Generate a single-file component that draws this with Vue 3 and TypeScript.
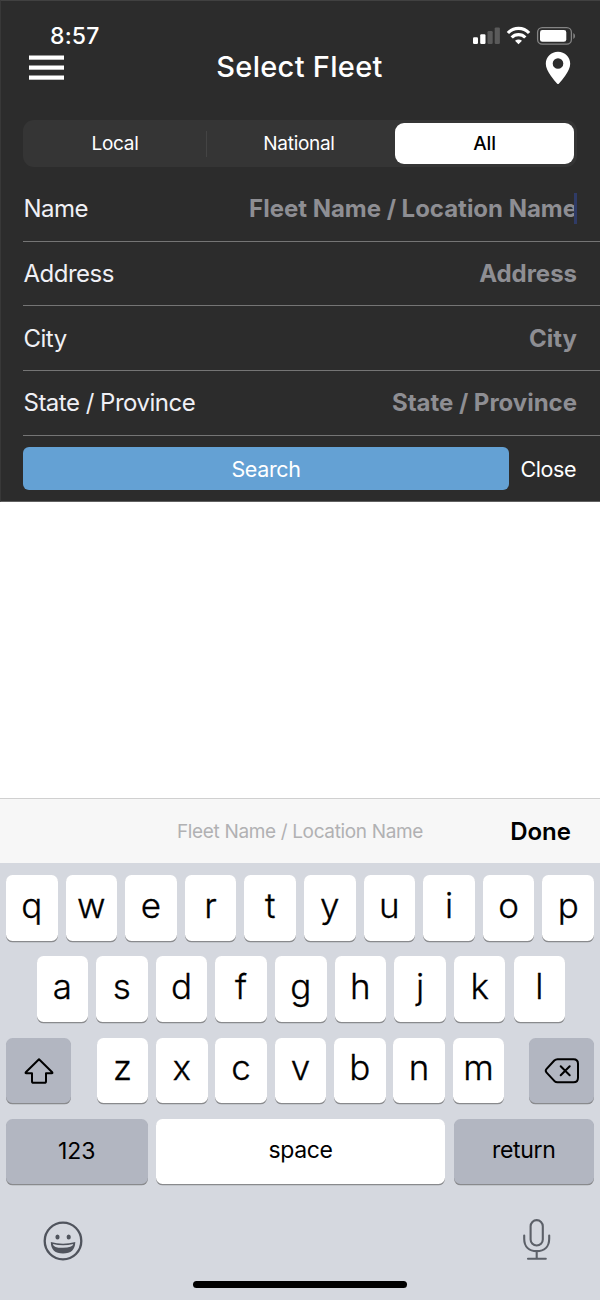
<script setup lang="ts">
interface Field {
  id: string
  label: string
  placeholder: string
  active?: boolean
}

const segments: string[] = ['Local', 'National', 'All']
const selected = 'All'

const fields: Field[] = [
  { id: 'name', label: 'Name', placeholder: 'Fleet Name / Location Name', active: true },
  { id: 'address', label: 'Address', placeholder: 'Address' },
  { id: 'city', label: 'City', placeholder: 'City' },
  { id: 'state', label: 'State / Province', placeholder: 'State / Province' },
]

const topRow: string[] = [...'qwertyuiop']
const homeRow: string[] = [...'asdfghjkl']
const bottomRow: string[] = [...'zxcvbnm']
</script>

<template>
  <div class="screen">
    <header class="panel">
      <div class="status">
        <span class="time">8:57</span>
        <svg class="status-icons" width="104" height="20" viewBox="0 0 104 20">
          <rect x="1" y="11.3" width="5" height="6.7" rx="1.2" fill="#fff" />
          <rect x="8.2" y="8.3" width="5.3" height="9.7" rx="1.2" fill="#fff" />
          <rect x="15.5" y="5" width="5.2" height="13" rx="1.2" fill="#5a5a5a" />
          <rect x="22.7" y="1.4" width="5.2" height="16.6" rx="1.2" fill="#5a5a5a" />
          <g fill="none" stroke="#fff" stroke-width="3.2">
            <path d="M35.900 7a14.400 14.400 0 0 1 21.200 0" />
            <path d="M39.700 11.500a9.300 9.300 0 0 1 13.600 0" />
          </g>
          <path d="M43 14.800q3.500-2.800 7 0L46.500 18.200z" fill="#fff" />
          <rect x="65.6" y="1.6" width="33.8" height="16.6" rx="4.6" fill="none" stroke="#858585" stroke-width="1.3" />
          <rect x="68" y="4" width="26.3" height="11.8" rx="2.4" fill="#fff" />
          <path d="M101.3 7q1.8 1 1.8 3t-1.8 3z" fill="#858585" />
        </svg>
      </div>

      <div class="navbar">
        <svg width="35" height="26" viewBox="0 0 35 26" fill="#fff">
          <rect y="0.5" width="35" height="4.2" />
          <rect y="10.5" width="35" height="4.2" />
          <rect y="20.5" width="35" height="4.2" />
        </svg>
        <h1 class="title">Select Fleet</h1>
        <svg width="26" height="34" viewBox="0 0 26 34">
          <path d="M13 .7C6.2.7.8 6 .8 12.7c0 4.2 2.3 8 5 12 2.200 3.200 4.700 6 6.200 7.900q1 1 2 0c1.500-1.900 4-4.700 6.200-7.900 2.700-4 5-7.800 5-12C25.200 6 19.800.7 13 .7zM13 7.200a5.300 5.300 0 1 1 0 10.600 5.300 5.300 0 0 1 0-10.600z" fill="#fff" fill-rule="evenodd" />
        </svg>
      </div>

      <div class="segmented">
        <div v-for="s in segments" :key="s" class="segment" :class="{ selected: s === selected }">{{ s }}</div>
      </div>

      <div class="fields">
        <div v-for="f in fields" :key="f.id" class="field">
          <span class="label">{{ f.label }}</span>
          <span class="placeholder" :class="f.id">{{ f.placeholder }}<i v-if="f.active" class="caret" /></span>
        </div>
      </div>

      <div class="actions">
        <div class="search">Search</div>
        <span class="close">Close</span>
      </div>
    </header>

    <main class="results" />

    <div class="accessory">
      <span class="hint">Fleet Name / Location Name</span>
      <span class="done">Done</span>
    </div>

    <section class="keyboard">
      <div class="keys">
        <div v-for="k in topRow" :key="k" class="key"><span>{{ k }}</span></div>
      </div>
      <div class="keys home">
        <div v-for="k in homeRow" :key="k" class="key"><span>{{ k }}</span></div>
      </div>
      <div class="keys lower">
        <div class="key gray side">
          <svg width="30" height="28" viewBox="0 0 30 28" fill="none" stroke="#000" stroke-width="2" stroke-linejoin="round">
            <path d="M15 2.200 28.200 15.300q.6.900-.4.900H22v8q0 1.600-1.600 1.600H9.600Q8 25.800 8 24.200v-8H2.200q-1 0-.4-.9z" />
          </svg>
        </div>
        <div class="letters">
          <div v-for="k in bottomRow" :key="k" class="key"><span>{{ k }}</span></div>
        </div>
        <div class="key gray side">
          <svg width="36" height="28" viewBox="0 0 36 28" fill="none" stroke="#000" stroke-width="2" stroke-linejoin="round" stroke-linecap="round">
            <path d="M13.500 2.200H29.500Q34 2.200 34 6.700V20.700Q34 25.200 29.500 25.200H13.500Q11.700 25.200 10.300 23.900L2.600 15.600Q.9 13.700 2.600 11.800L10.300 3.500Q11.700 2.200 13.500 2.200z" />
            <path d="M16.700 9.200l9 9m0-9-9 9" />
          </svg>
        </div>
      </div>
      <div class="keys functions">
        <div class="key gray word numbers"><span>123</span></div>
        <div class="key word space"><span>space</span></div>
        <div class="key gray word return"><span>return</span></div>
      </div>
      <div class="dock">
        <svg width="40" height="40" viewBox="0 0 40 40">
          <circle cx="20" cy="20" r="18.300" fill="none" stroke="#50545d" stroke-width="2.300" />
          <ellipse cx="14.500" cy="16" rx="2.100" ry="2.500" fill="#50545d" />
          <ellipse cx="25.700" cy="16" rx="2.100" ry="2.500" fill="#50545d" />
          <path d="M7.800 20.900Q20 24.500 32.300 20.900 32 32.400 20 32.400T7.800 20.900z" fill="#50545d" />
          <path d="M9.800 22.900Q20 25.400 30.300 22.900 29.400 26.600 20 26.800T9.800 22.900z" fill="#d5d8df" />
        </svg>
        <svg width="30" height="44" viewBox="0 1.500 30 44" fill="none" stroke="#5c6068" stroke-width="2.100" stroke-linecap="round">
          <rect x="8.600" y="2.600" width="12.200" height="25.400" rx="6.100" />
          <path d="M2.200 18v3.200c0 8 5 12.400 12.500 12.400s12.500-4.400 12.500-12.400V18M14.700 33.600v7.600M6 41.200h17.800" />
        </svg>
      </div>
      <div class="home-indicator" />
    </section>
  </div>
</template>

<style>
body {
  margin: 0;
}
</style>

<style scoped>
.screen {
  box-sizing: border-box;
  width: 600px;
  height: 1300px;
  display: flex;
  flex-direction: column;
  overflow: hidden;
  background: #fff;
  font-family: Inter, "Liberation Sans", sans-serif;
}

.panel {
  box-sizing: border-box;
  height: 502px;
  flex: none;
  background: #2c2c2c;
  color: #fff;
  border-top: 1px solid #414141;
  border-left: 1px solid #383838;
  border-bottom: 1px solid #606060;
}

.status {
  height: 50px;
  box-sizing: border-box;
  padding: 21px 24px 0 49px;
  display: flex;
  justify-content: space-between;
}

.time {
  line-height: 29px;
  font-size: 23px;
  font-weight: 500;
  letter-spacing: 0.2px;
}

.status-icons {
  margin-top: 4px;
}

.navbar {
  display: flex;
  height: 34px;
  align-items: center;
  justify-content: space-between;
  padding: 0 29px 0 28px;
}

.title {
  margin: 0 10px 2px 0;
  font-size: 29px;
  font-weight: 500;
  line-height: 34px;
  letter-spacing: 0.3px;
}

.segmented {
  box-sizing: border-box;
  display: flex;
  height: 47px;
  margin: 35px 23px 0 22px;
  padding: 3px;
  border-radius: 11px;
  background: #353535;
}

.segment {
  box-sizing: border-box;
  flex: 1;
  line-height: 42px;
  padding-right: 4px;
  text-align: center;
  font-size: 19px;
  letter-spacing: -0.3px;
}

.segment:first-child {
  position: relative;
  flex: 0 0 181px;
  padding-right: 3px;
}

.segment:first-child::after {
  content: "";
  position: absolute;
  right: 0;
  top: 8px;
  width: 1px;
  height: 26px;
  background: #444;
}

.segment.selected {
  flex: 0 0 179px;
  height: 41px;
  padding: 0;
  border-radius: 9px;
  background: #fff;
  color: #000;
  font-weight: 500;
  letter-spacing: -0.1px;
}

.fields {
  margin: 10.200px 0 0 22px;
}

.field {
  box-sizing: border-box;
  height: 64.600px;
  display: flex;
  align-items: center;
  justify-content: space-between;
  padding: 0 23px 0 0.500px;
  border-bottom: 1.500px solid #757575;
}

.label {
  font-size: 24px;
  color: #f0f0f5;
  letter-spacing: -0.5px;
}

.placeholder {
  position: relative;
  font-size: 24px;
  font-weight: 700;
  color: #8e8e93;
  letter-spacing: -0.02px;
}

.caret {
  position: absolute;
  right: 0;
  top: -1px;
  width: 3px;
  height: 31px;
  background: #2f3b66;
}

.actions {
  display: flex;
  align-items: center;
  justify-content: space-between;
  height: 44px;
  margin: 11px 24px 0 22px;
}

.search {
  width: 486px;
  height: 43px;
  border-radius: 6px;
  background: #64a1d4;
  line-height: 44px;
  text-align: center;
  font-size: 21.500px;
  letter-spacing: -0.35px;
}

.close {
  font-size: 21.500px;
  line-height: 43px;
  padding-top: 1px;
  letter-spacing: -0.45px;
}

.results {
  height: 296px;
  flex: none;
}

.accessory {
  position: relative;
  box-sizing: border-box;
  height: 65px;
  flex: none;
  display: flex;
  align-items: center;
  justify-content: center;
  border-top: 1px solid #d0d0d0;
  background: #f7f7f7;
}

.hint {
  font-size: 19px;
  color: #b1b1b3;
  letter-spacing: -0.35px;
}

.done {
  position: absolute;
  right: 29px;
  font-size: 24px;
  font-weight: 600;
  color: #000;
}

.keyboard {
  box-sizing: border-box;
  flex: 1;
  padding: 12px 6px 0;
  background: #d5d8df;
  color: #000;
}

.keys {
  display: flex;
  justify-content: space-between;
  height: 65.500px;
  margin-bottom: 15.800px;
}

.keys.home {
  padding: 0 29px 0 30.500px;
}

.key {
  box-sizing: border-box;
  width: 51.500px;
  height: 65.500px;
  border-radius: 6.500px;
  background: #fff;
  box-shadow: 0 1.300px 0 #898a8d;
  display: flex;
  align-items: center;
  justify-content: center;
  font-size: 35px;
  font-weight: 300;
  -webkit-text-stroke: 0.3px #000;
}

.key span {
  position: relative;
  top: -3px;
}

.gray {
  background: #b2b6c1;
}

.side {
  width: 65px;
}

.side svg {
  margin-top: 2px;
}

.letters {
  display: flex;
  justify-content: space-between;
  width: 407.500px;
  margin-left: 1px;
}

.key.word {
  font-size: 23px;
  font-weight: 400;
  letter-spacing: -0.35px;
  -webkit-text-stroke: 0;
}

.key.word span {
  top: -1.500px;
}

.key.numbers {
  width: 141.500px;
  letter-spacing: 0;
}

.key.numbers span {
  top: -0.500px;
}

.key.space {
  width: 289px;
}

.key.return {
  width: 140.500px;
}

.dock {
  display: flex;
  justify-content: space-between;
  align-items: center;
  padding: 19.300px 42px 0 37px;
}

.home-indicator {
  width: 214px;
  height: 7px;
  margin: 18px auto 0;
  border-radius: 4px;
  background: #000;
}
</style>
